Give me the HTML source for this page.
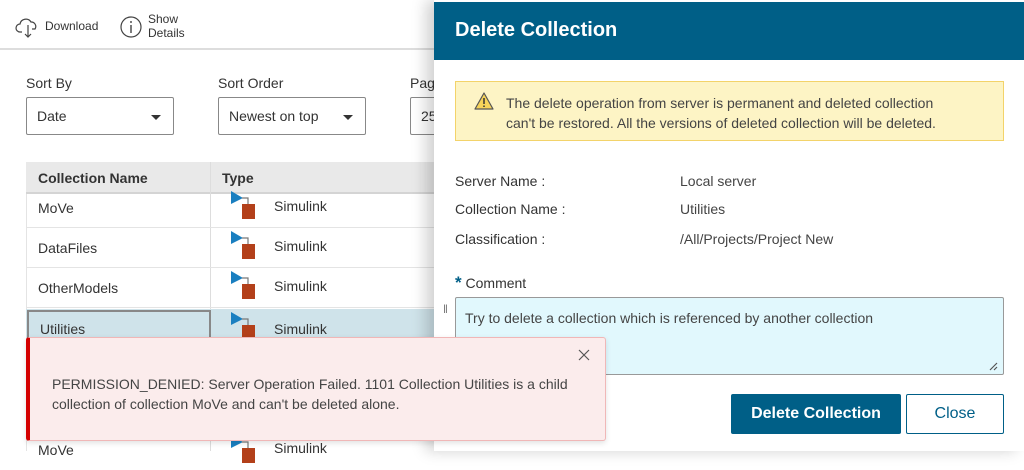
<!DOCTYPE html>
<html><head><style>
*{box-sizing:border-box;margin:0;padding:0}
body{width:1024px;height:451px;overflow:hidden;background:#fff;font-family:"Liberation Sans",sans-serif;color:#333;position:relative;font-size:14px}
.a{position:absolute}
.sel{position:absolute;border:1px solid #888;border-radius:2px;height:38px;background:#fff;font-size:14px;padding:10px 10px}
.sel .c{position:absolute;right:12px;top:17px;width:0;height:0;border-left:5px solid transparent;border-right:5px solid transparent;border-top:5px solid #333}
.row{position:absolute;left:26px;width:430px;height:40px;border-bottom:1px solid #e4e4e4}
.row .n{position:absolute;left:12px;top:10px;font-size:14px}
.row .t{position:absolute;left:248px;top:10px;font-size:14px}
.ic{position:absolute;left:204px;top:2px;width:30px;height:30px}
.lbl{position:absolute;left:455px;font-size:14px;color:#333}
.val{position:absolute;left:680px;font-size:14px;color:#444}
</style></head><body>
<div class="a" style="left:0;top:0;width:440px;height:50px;border-bottom:2px solid #ddd"></div>
<svg class="a" style="left:15px;top:16px" width="26" height="22" viewBox="0 0 26 22"><path d="M7 16H5a4 4 0 0 1 0-8 6 6 0 0 1 11-2 4.5 4.5 0 0 1 4 7h-3" fill="none" stroke="#444" stroke-width="1.2"/><path d="M13 9v12M10 18l3 3 3-3" fill="none" stroke="#444" stroke-width="1.2"/></svg>
<div class="a" style="left:45px;top:19px;font-size:12px">Download</div>
<svg class="a" style="left:119px;top:15px" width="24" height="24"><circle cx="12" cy="12" r="10" fill="none" stroke="#444" stroke-width="1.2"/><path d="M12 10v8M12 6v2" stroke="#444" stroke-width="1.4"/></svg>
<div class="a" style="left:148px;top:12px;font-size:12px;line-height:14px">Show<br>Details</div>
<div class="a" style="left:26px;top:75px;font-size:14px">Sort By</div>
<div class="sel" style="left:26px;top:97px;width:148px">Date<span class="c"></span></div>
<div class="a" style="left:218px;top:75px;font-size:14px">Sort Order</div>
<div class="sel" style="left:218px;top:97px;width:148px">Newest on top<span class="c"></span></div>
<div class="a" style="left:410px;top:75px;font-size:14px">Pag</div>
<div class="sel" style="left:410px;top:97px;width:60px">25</div>
<div class="a" style="left:26px;top:162px;width:430px;height:32px;background:#e9e9e9;border-bottom:2px solid #d4d4d4"></div>
<div class="a" style="left:38px;top:170px;font-weight:bold;font-size:14px;color:#333">Collection Name</div>
<div class="a" style="left:222px;top:170px;font-weight:bold;font-size:14px;color:#333">Type</div>
<div class="a" style="left:210px;top:162px;width:1px;height:289px;background:#ddd"></div>
<div class="a" style="left:26px;top:194px;width:1px;height:257px;background:#e4e4e4"></div>
<div class="a" style="left:26px;top:309px;width:430px;height:42px;background:#cfe3ea"></div>
<div class="a" style="left:27px;top:310px;width:184px;height:40px;border:2px solid #888"></div>
<div class="row" style="top:188px"><span class="n" style="top:12px">MoVe</span><svg class="ic" viewBox="0 0 30 30"><path d="M1 1l12 7-12 6z" fill="#1a7fc0"/><path d="M12 8h6v8" fill="none" stroke="#777" stroke-width="1.2"/><rect x="12" y="14" width="13" height="15" fill="#b3401a"/></svg><span class="t">Simulink</span></div>
<div class="row" style="top:228px"><span class="n" style="top:12px">DataFiles</span><svg class="ic" viewBox="0 0 30 30"><path d="M1 1l12 7-12 6z" fill="#1a7fc0"/><path d="M12 8h6v8" fill="none" stroke="#777" stroke-width="1.2"/><rect x="12" y="14" width="13" height="15" fill="#b3401a"/></svg><span class="t">Simulink</span></div>
<div class="row" style="top:268px"><span class="n" style="top:12px">OtherModels</span><svg class="ic" viewBox="0 0 30 30"><path d="M1 1l12 7-12 6z" fill="#1a7fc0"/><path d="M12 8h6v8" fill="none" stroke="#777" stroke-width="1.2"/><rect x="12" y="14" width="13" height="15" fill="#b3401a"/></svg><span class="t">Simulink</span></div>
<div class="row" style="top:309px;border:none"><span class="n" style="left:14px;top:12px">Utilities</span><svg class="ic" viewBox="0 0 30 30"><path d="M1 1l12 7-12 6z" fill="#1a7fc0"/><path d="M12 8h6v8" fill="none" stroke="#777" stroke-width="1.2"/><rect x="12" y="14" width="13" height="15" fill="#b3401a"/></svg><span class="t" style="top:12px">Simulink</span></div>
<div class="row" style="top:430px;border:none"><span class="n" style="top:12px">MoVe</span><svg class="ic" viewBox="0 0 30 30" style="top:4px"><path d="M1 1l12 7-12 6z" fill="#1a7fc0"/><path d="M12 8h6v8" fill="none" stroke="#777" stroke-width="1.2"/><rect x="12" y="14" width="13" height="15" fill="#b3401a"/></svg><span class="t" style="top:10px">Simulink</span></div>
<div class="a" style="left:434px;top:0;width:590px;height:451px;background:#fff;box-shadow:-8px 0 14px rgba(0,0,0,0.18)"></div>
<div class="a" style="left:434px;top:2px;width:590px;height:58px;background:#005f87"></div>
<div class="a" style="left:455px;top:19px;color:#fff;font-weight:bold;font-size:20px">Delete Collection</div>
<div class="a" style="left:455px;top:81px;width:549px;height:60px;background:#fdf4c5;border:1px solid #f3d36a"></div>
<svg class="a" style="left:474px;top:92px" width="20" height="18" viewBox="0 0 20 18"><path d="M10 1L19 17H1z" fill="#f6d35a" stroke="#555" stroke-width="1.2" stroke-linejoin="round"/><path d="M10 6v6M10 13.5v1.5" stroke="#333" stroke-width="1.5"/></svg>
<div class="a" style="left:506px;top:93px;font-size:14px;line-height:20px;color:#444">The delete operation from server is permanent and deleted collection<br>can't be restored. All the versions of deleted collection will be deleted.</div>
<div class="lbl" style="top:173px">Server Name :</div><div class="val" style="top:173px">Local server</div>
<div class="lbl" style="top:201px">Collection Name :</div><div class="val" style="top:201px">Utilities</div>
<div class="lbl" style="top:231px">Classification :</div><div class="val" style="top:231px">/All/Projects/Project New</div>
<div class="a" style="left:455px;top:273px;font-size:14px"><span style="color:#005f87;font-size:17px;font-weight:bold">*</span> Comment</div>
<div class="a" style="left:443px;top:302px;font-size:12px;color:#777">‖</div>
<div class="a" style="left:455px;top:297px;width:549px;height:78px;background:#e1f8fd;border:1px solid #999;border-radius:2px"></div>
<div class="a" style="left:465px;top:310px;font-size:14px;color:#444">Try to delete a collection which is referenced by another collection</div>
<svg class="a" style="left:988px;top:361px" width="10" height="10"><path d="M2 9L9 2M6 9L9 6" stroke="#555" stroke-width="1.2"/></svg>
<div class="a" style="left:731px;top:394px;width:170px;height:40px;background:#005f87;border-radius:2px;color:#fff;font-weight:bold;font-size:16px;text-align:center;line-height:40px">Delete Collection</div>
<div class="a" style="left:906px;top:394px;width:98px;height:40px;background:#fff;border:1px solid #005f87;border-radius:2px;color:#005f87;font-size:16px;text-align:center;line-height:38px">Close</div>
<div class="a" style="left:26px;top:337px;width:580px;height:104px;background:#fbecec;border:1px solid #f0b7b7;border-left:4px solid #d40000;border-radius:3px;box-shadow:0 2px 6px rgba(0,0,0,0.12)"></div>
<svg class="a" style="left:578px;top:349px" width="12" height="12"><path d="M1 1L11 11M11 1L1 11" stroke="#555" stroke-width="1.2"/></svg>
<div class="a" style="left:52px;top:374px;font-size:14px;line-height:20px;color:#444">PERMISSION_DENIED: Server Operation Failed. 1101 Collection Utilities is a child<br>collection of collection MoVe and can't be deleted alone.</div>
</body></html>
